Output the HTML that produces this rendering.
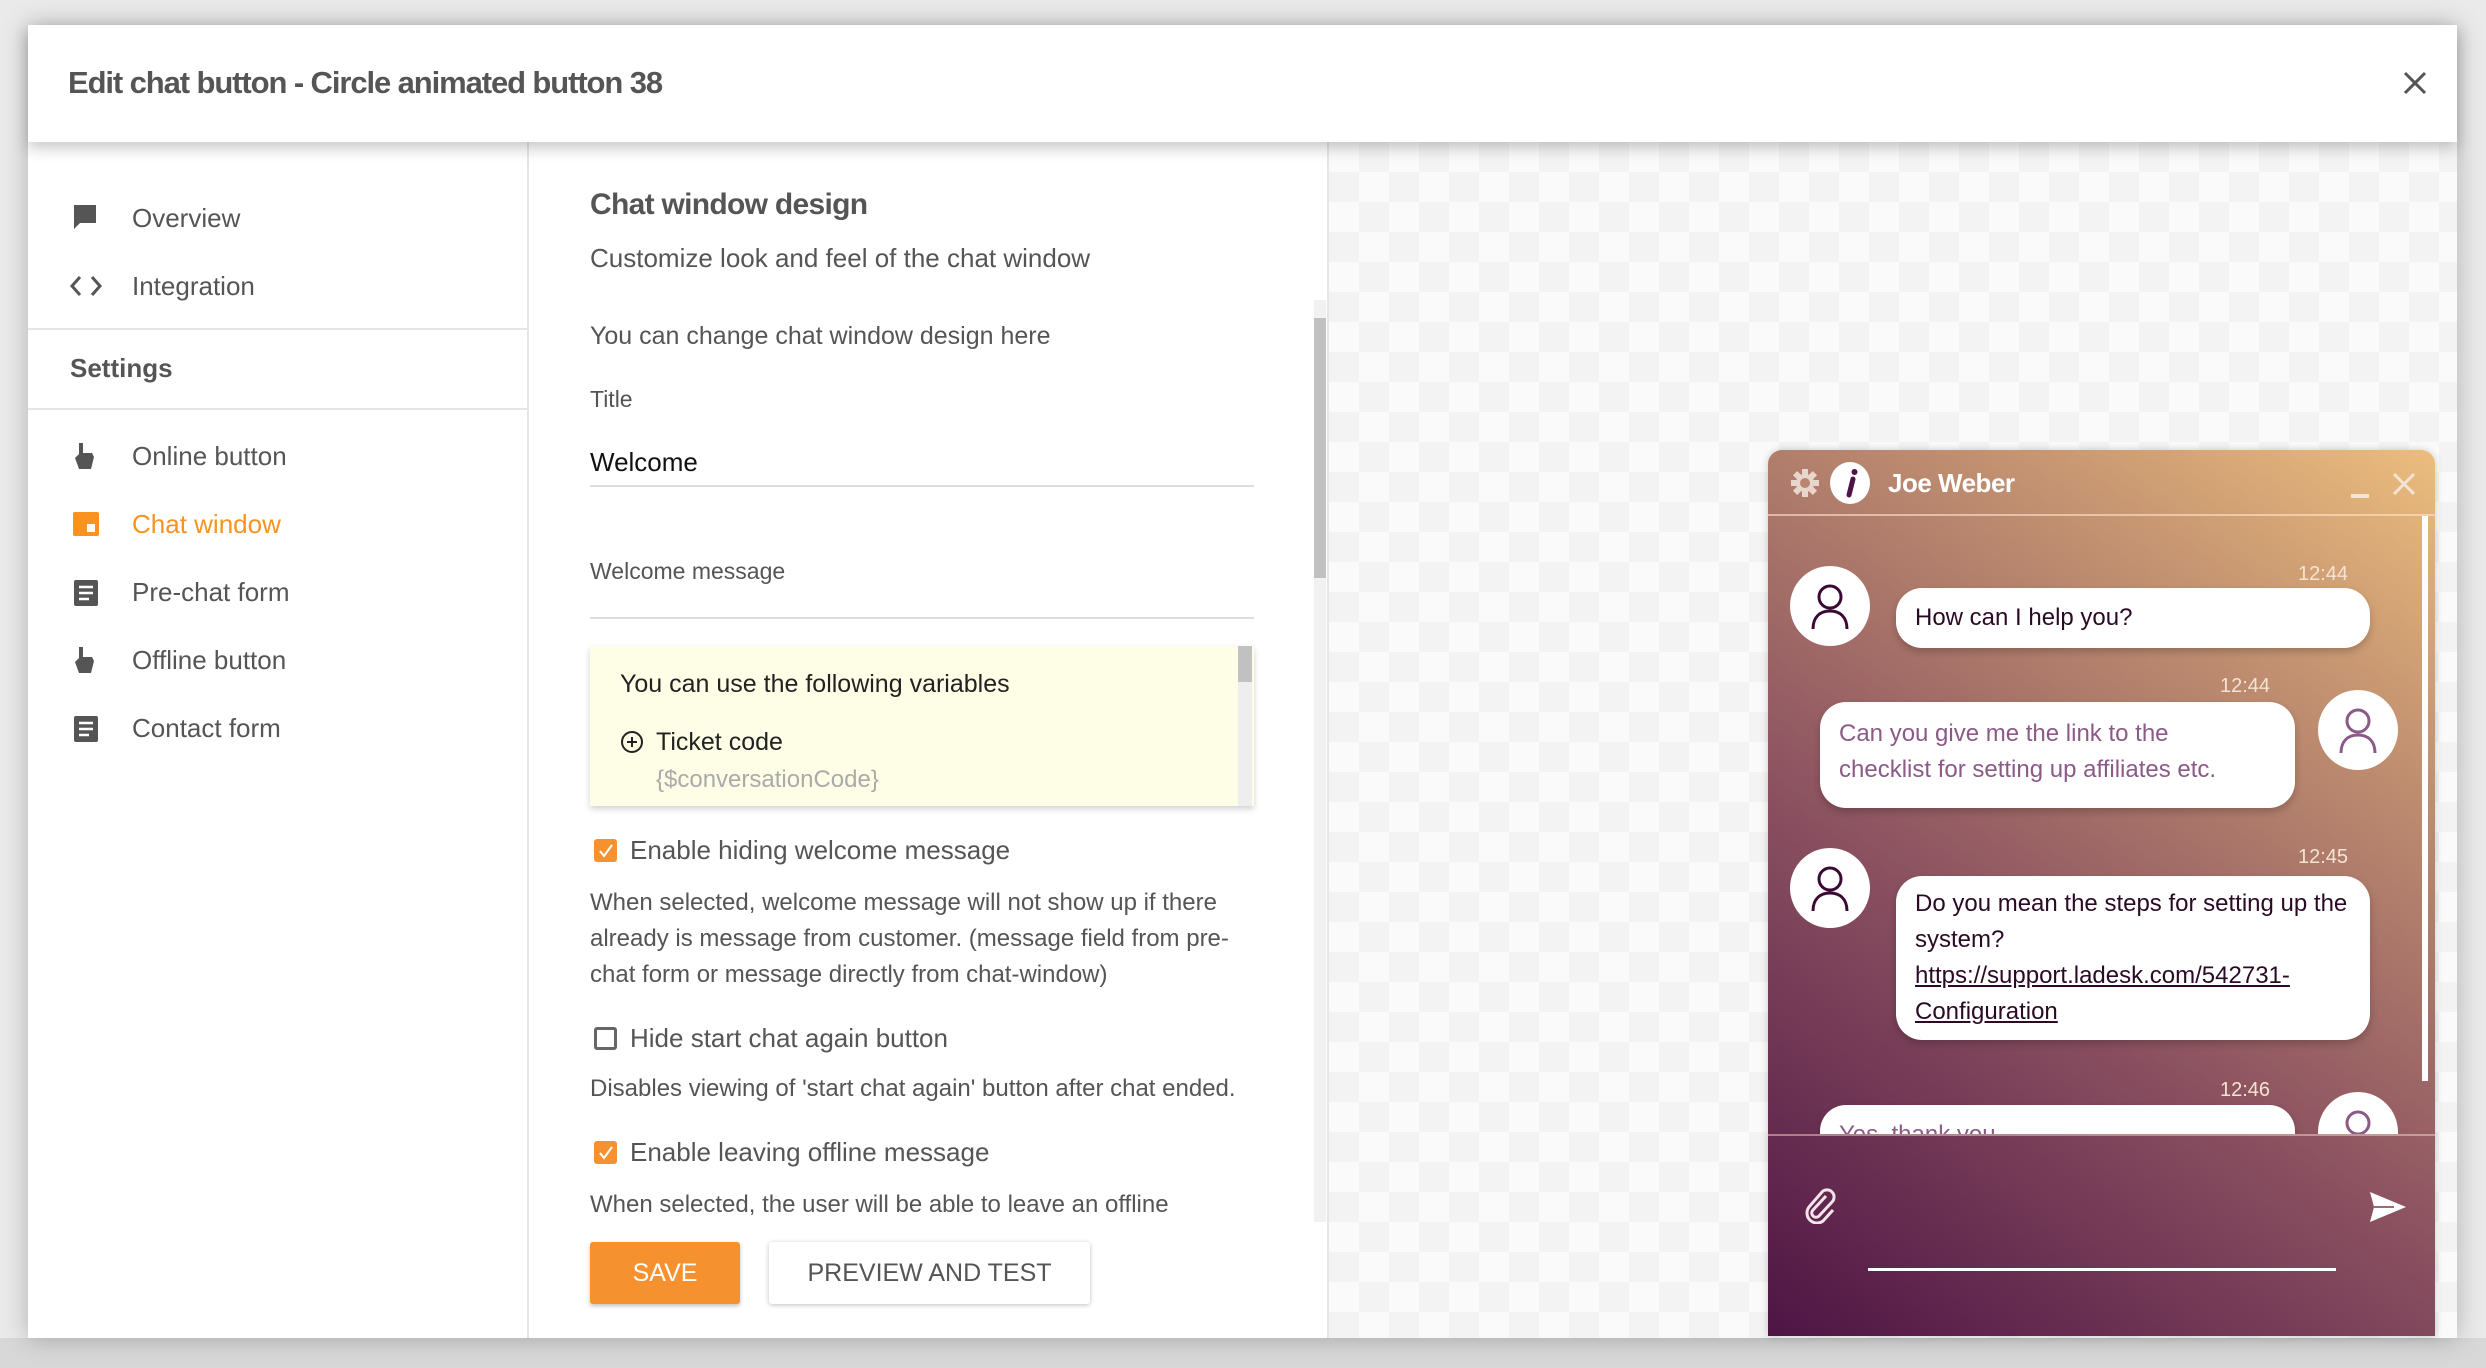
<!DOCTYPE html>
<html><head><meta charset="utf-8"><style>
*{margin:0;padding:0;box-sizing:border-box}
body{width:2486px;height:1368px;overflow:hidden;background:#e6e6e6;font-family:"Liberation Sans",Arial,sans-serif;position:relative;color:#555}
.a{position:absolute}
.t{position:absolute;white-space:nowrap;line-height:40px;height:40px}
.modal{left:28px;top:25px;width:2429px;height:1313px;background:#fff;box-shadow:0 0 24px rgba(0,0,0,.25)}
.hdr{left:28px;top:25px;width:2429px;height:117px;background:#fff;box-shadow:0 6px 14px rgba(0,0,0,.22);z-index:5}
.check{background-image:linear-gradient(45deg,#f3f3f3 25%,transparent 25%,transparent 75%,#f3f3f3 75%),linear-gradient(45deg,#f3f3f3 25%,transparent 25%,transparent 75%,#f3f3f3 75%);background-size:60px 60px;background-position:0 0,30px 30px;background-color:#fafafa}
.mi{font-size:26px;color:#555}
.p{font-size:24px;color:#555}
.cb{position:absolute;width:23px;height:23px;border-radius:3px}
.on{background:#f5922f}
.off{border:3px solid #666;background:#fff}
.bub{position:absolute;background:#fff;border-radius:26px;box-shadow:0 4px 8px rgba(0,0,0,.2);font-size:24px;line-height:36px;padding:12px 19px}
.av{position:absolute;width:80px;height:80px;border-radius:50%;background:#fff}
.tm{position:absolute;font-size:20px;color:#f4e4d4;line-height:24px;z-index:3}
</style></head><body>
<div class="a" style="left:0;top:0;width:2486px;height:1368px;background:#eaeaea"></div>
<div class="a" style="left:0;top:1338px;width:2486px;height:30px;background:#d8d8d8"></div>
<div class="a modal"></div>
<div class="a hdr"></div>
<div class="t" style="left:68px;top:63px;font-size:31px;font-weight:bold;color:#555;z-index:6;letter-spacing:-1.1px">Edit chat button - Circle animated button 38</div>
<svg class="a" style="left:2403px;top:71px;z-index:6" width="24" height="24"><path d="M2 2L22 22M22 2L2 22" stroke="#555" stroke-width="3"/></svg>

<!-- sidebar -->
<div class="a" style="left:527px;top:142px;width:2px;height:1196px;background:#e6e6e6"></div>
<svg class="a" style="left:72px;top:204px" width="26" height="26"><path d="M2 1h22v18H8l-6 6z" fill="#555"/></svg>
<div class="t mi" style="left:132px;top:198px">Overview</div>
<svg class="a" style="left:70px;top:274px" width="32" height="24"><path d="M10 3L2 12l8 9M22 3l8 9-8 9" stroke="#555" stroke-width="3" fill="none"/></svg>
<div class="t mi" style="left:132px;top:266px">Integration</div>
<div class="a" style="left:28px;top:328px;width:500px;height:2px;background:#e6e6e6"></div>
<div class="t" style="left:70px;top:348px;font-size:26px;font-weight:bold;color:#555">Settings</div>
<div class="a" style="left:28px;top:408px;width:500px;height:2px;background:#e6e6e6"></div>
<svg class="a" style="left:74px;top:442px" width="22" height="28"><path d="M5 1h4v10h9l2 4-3 12H5L1 16l4-4z" fill="#555"/></svg>
<div class="t mi" style="left:132px;top:436px">Online button</div>
<svg class="a" style="left:72px;top:511px" width="28" height="26"><rect x="1" y="1" width="26" height="24" rx="2" fill="#f7931e"/><rect x="15" y="13" width="8" height="8" fill="#fff"/></svg>
<div class="t mi" style="left:132px;top:504px;color:#f7931e">Chat window</div>
<svg class="a" style="left:73px;top:579px" width="26" height="28"><rect x="1" y="1" width="24" height="26" rx="2" fill="#555"/><path d="M6 8h14M6 14h14M6 20h10" stroke="#fff" stroke-width="2.5"/></svg>
<div class="t mi" style="left:132px;top:572px">Pre-chat form</div>
<svg class="a" style="left:74px;top:646px" width="22" height="28"><path d="M5 1h4v10h9l2 4-3 12H5L1 16l4-4z" fill="#555"/></svg>
<div class="t mi" style="left:132px;top:640px">Offline button</div>
<svg class="a" style="left:73px;top:715px" width="26" height="28"><rect x="1" y="1" width="24" height="26" rx="2" fill="#555"/><path d="M6 8h14M6 14h14M6 20h10" stroke="#fff" stroke-width="2.5"/></svg>
<div class="t mi" style="left:132px;top:708px">Contact form</div>

<!-- middle -->
<div class="a" style="left:1327px;top:142px;width:2px;height:1196px;background:#e6e6e6"></div>
<div class="a" style="left:1314px;top:300px;width:12px;height:922px;background:#f1f1f1"></div>
<div class="a" style="left:1314px;top:318px;width:12px;height:260px;background:#c1c1c1"></div>
<div class="t" style="left:590px;top:185px;font-size:30px;font-weight:bold;color:#555;letter-spacing:-0.7px">Chat window design</div>
<div class="t p" style="left:590px;top:238px;font-size:26px">Customize look and feel of the chat window</div>
<div class="t p" style="left:590px;top:316px;font-size:25px">You can change chat window design here</div>
<div class="t p" style="left:590px;top:379px;font-size:23px">Title</div>
<div class="t" style="left:590px;top:442px;font-size:26px;color:#111">Welcome</div>
<div class="a" style="left:590px;top:485px;width:664px;height:2px;background:#ddd"></div>
<div class="t p" style="left:590px;top:551px;font-size:23px">Welcome message</div>
<div class="a" style="left:590px;top:617px;width:664px;height:2px;background:#ddd"></div>
<div class="a" style="left:590px;top:646px;width:664px;height:160px;background:#fefee6;box-shadow:0 3px 6px rgba(0,0,0,.18)"></div>
<div class="a" style="left:1238px;top:646px;width:14px;height:160px;background:#eee"></div>
<div class="a" style="left:1238px;top:646px;width:14px;height:36px;background:#c1c1c1"></div>
<div class="t" style="left:620px;top:664px;font-size:25px;color:#222">You can use the following variables</div>
<svg class="a" style="left:620px;top:730px" width="24" height="24"><circle cx="12" cy="12" r="10" fill="none" stroke="#222" stroke-width="2"/><path d="M12 7v10M7 12h10" stroke="#222" stroke-width="2"/></svg>
<div class="t" style="left:656px;top:722px;font-size:25px;color:#222">Ticket code</div>
<div class="t" style="left:656px;top:760px;font-size:24px;color:#aaa">{$conversationCode}</div>

<div class="cb on" style="left:594px;top:839px"></div>
<svg class="a" style="left:597px;top:842px" width="18" height="18"><path d="M3 9l4 5 8-11" stroke="#fff" stroke-width="2" fill="none"/></svg>
<div class="t" style="left:630px;top:830px;font-size:26px;color:#555">Enable hiding welcome message</div>
<div class="a p" style="left:590px;top:885px;width:660px;line-height:36px">When selected, welcome message will not show up if there already is message from customer. (message field from pre-chat form or message directly from chat-window)</div>
<div class="cb off" style="left:594px;top:1027px"></div>
<div class="t" style="left:630px;top:1018px;font-size:26px;color:#555">Hide start chat again button</div>
<div class="t p" style="left:590px;top:1069px">Disables viewing of 'start chat again' button after chat ended.</div>
<div class="cb on" style="left:594px;top:1141px"></div>
<svg class="a" style="left:597px;top:1144px" width="18" height="18"><path d="M3 9l4 5 8-11" stroke="#fff" stroke-width="2" fill="none"/></svg>
<div class="t" style="left:630px;top:1132px;font-size:26px;color:#555">Enable leaving offline message</div>
<div class="t p" style="left:590px;top:1185px">When selected, the user will be able to leave an offline</div>
<div class="a" style="left:590px;top:1242px;width:150px;height:62px;background:#f5922f;border-radius:3px;box-shadow:0 2px 4px rgba(0,0,0,.25);color:#fff;font-size:25px;line-height:62px;text-align:center">SAVE</div>
<div class="a" style="left:769px;top:1242px;width:321px;height:62px;background:#fff;border-radius:3px;box-shadow:0 1px 5px rgba(0,0,0,.25);color:#555;font-size:25px;line-height:62px;text-align:center">PREVIEW AND TEST</div>

<!-- preview -->
<div class="a check" style="left:1329px;top:142px;width:1128px;height:1196px"></div>
<div class="a" style="left:1768px;top:450px;width:667px;height:886px;border-radius:14px 14px 0 0;overflow:hidden;background:linear-gradient(35deg,#4e1445 0%,#8a5060 40%,#c08f70 75%,#ecbd7d 100%);box-shadow:0 0 8px rgba(0,0,0,.2)">
 <div class="a" style="left:0;top:64px;width:667px;height:2px;background:rgba(255,230,210,.6)"></div>
 <div class="a" style="left:0;top:684px;width:667px;height:2px;background:rgba(255,230,210,.45)"></div>
 <div class="a" style="left:654px;top:66px;width:6px;height:565px;background:#fff"></div>
 <svg class="a" style="left:22px;top:18px" width="30" height="30"><g fill="#e8d6cc"><circle cx="15" cy="15" r="9"/><rect x="12" y="1" width="6" height="28"/><rect x="1" y="12" width="28" height="6"/><rect x="12" y="1" width="6" height="28" transform="rotate(45 15 15)"/><rect x="12" y="1" width="6" height="28" transform="rotate(-45 15 15)"/></g><circle cx="15" cy="15" r="5" fill="#b98571"/></svg>
 <div class="a" style="left:62px;top:12px;width:40px;height:42px;border-radius:50%;background:#fff"></div>
 <svg class="a" style="left:62px;top:12px" width="40" height="42"><path d="M23 17l-4 16" stroke="#4e1445" stroke-width="5" stroke-linecap="round"/><circle cx="24.5" cy="10" r="3" fill="#4e1445"/></svg>
 <div class="t" style="left:120px;top:13px;font-size:26px;font-weight:bold;color:#fff;letter-spacing:-0.5px">Joe Weber</div>
 <div class="a" style="left:583px;top:44px;width:18px;height:4px;background:#f4e4d4"></div>
 <svg class="a" style="left:624px;top:22px" width="24" height="24"><path d="M2 2L22 22M22 2L2 22" stroke="#f4e4d4" stroke-width="3"/></svg>

 <div class="av" style="left:22px;top:116px"></div>
 <svg class="a" style="left:42px;top:131px" width="40" height="50"><circle cx="20" cy="16" r="11" fill="none" stroke="#3a0a35" stroke-width="3"/><path d="M3 48c0-12 7-18 17-18s17 6 17 18" fill="none" stroke="#3a0a35" stroke-width="3"/></svg>
 <div class="tm" style="left:530px;top:112px">12:44</div>
 <div class="bub" style="left:128px;top:138px;width:474px;height:60px;color:#2a0a25">How can I help you?</div>

 <div class="tm" style="left:452px;top:224px">12:44</div>
 <div class="bub" style="left:52px;top:252px;width:475px;height:106px;color:#8b5a87;padding:14px 50px 14px 19px">Can you give me the link to the checklist for setting up affiliates etc.</div>
 <div class="av" style="left:550px;top:240px"></div>
 <svg class="a" style="left:570px;top:255px" width="40" height="50"><circle cx="20" cy="16" r="11" fill="none" stroke="#8b5a87" stroke-width="3"/><path d="M3 48c0-12 7-18 17-18s17 6 17 18" fill="none" stroke="#8b5a87" stroke-width="3"/></svg>

 <div class="av" style="left:22px;top:398px"></div>
 <svg class="a" style="left:42px;top:413px" width="40" height="50"><circle cx="20" cy="16" r="11" fill="none" stroke="#3a0a35" stroke-width="3"/><path d="M3 48c0-12 7-18 17-18s17 6 17 18" fill="none" stroke="#3a0a35" stroke-width="3"/></svg>
 <div class="tm" style="left:530px;top:395px">12:45</div>
 <div class="bub" style="left:128px;top:426px;width:474px;height:164px;color:#2a0a25;padding-top:10px">Do you mean the steps for setting up the system?<br><u>https://support.ladesk.com/542731-<br>Configuration</u></div>

 <div class="tm" style="left:452px;top:628px">12:46</div>
 <div class="a" style="left:0;top:0;width:667px;height:684px;overflow:hidden">
  <div class="bub" style="left:52px;top:655px;width:475px;height:80px;color:#8b5a87">Yes, thank you</div>
  <div class="av" style="left:550px;top:642px"></div>
  <svg class="a" style="left:570px;top:657px" width="40" height="50"><circle cx="20" cy="16" r="11" fill="none" stroke="#8b5a87" stroke-width="3"/><path d="M3 48c0-12 7-18 17-18s17 6 17 18" fill="none" stroke="#8b5a87" stroke-width="3"/></svg>
 </div>
 <svg class="a" style="left:36px;top:738px" width="32" height="36"><path d="M22 8L9 22a4 4 0 006 6l13-14a7 7 0 00-10-10L5 19a10 10 0 0014 14l10-11" fill="none" stroke="#f4e4ea" stroke-width="3"/></svg>
 <svg class="a" style="left:600px;top:740px" width="40" height="34"><path d="M2 2l36 15L2 32l4-15z" fill="#fff"/><path d="M6 17h20" stroke="#a26a75" stroke-width="2"/></svg>
 <div class="a" style="left:100px;top:818px;width:468px;height:3px;background:#fff"></div>
</div>
</body></html>
